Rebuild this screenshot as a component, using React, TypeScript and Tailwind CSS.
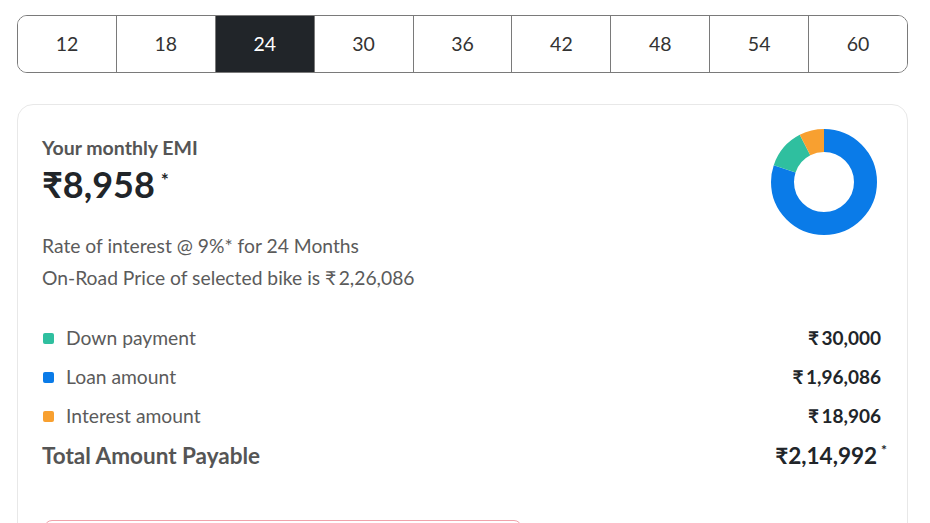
import React from "react";

const tenures = [12, 18, 24, 30, 36, 42, 48, 54, 60];
const selected = 24;

const breakdown = [
  { label: "Down payment", value: "30,000", amount: 30000, color: "#2fbf9f" },
  { label: "Loan amount", value: "1,96,086", amount: 196086, color: "#0a7be8" },
  { label: "Interest amount", value: "18,906", amount: 18906, color: "#f8a030" },
];

function Donut() {
  const r = 41.5;
  const c = 2 * Math.PI * r;
  // chart order: loan first from 12 o'clock, then down payment, then interest
  const order = [breakdown[1], breakdown[0], breakdown[2]];
  const total = order.reduce((s, d) => s + d.amount, 0);
  let offset = 0;
  return (
    <svg width="106" height="106" viewBox="0 0 106 106" className="block">
      <g transform="rotate(-90 53 53)">
        {order.map((d) => {
          const len = (d.amount / total) * c;
          const el = (
            <circle
              key={d.label}
              cx="53"
              cy="53"
              r={r}
              fill="none"
              stroke={d.color}
              strokeWidth="23"
              strokeDasharray={`${len} ${c - len}`}
              strokeDashoffset={-offset}
            />
          );
          offset += len;
          return el;
        })}
      </g>
    </svg>
  );
}

export default function App() {
  return (
    <div
      className="w-[930px] h-[523px] overflow-hidden bg-white pl-[17px] pr-[22px] pt-[15px]"
      style={{ fontFamily: "Lato, 'Noto Sans', sans-serif" }}
    >
      {/* tenure selector */}
      <div className="flex h-[58px] rounded-[10px] border-[1.5px] border-[#7a7a7a] overflow-hidden">
        {tenures.map((t, i) => (
          <div
            key={t}
            className={
              "flex-1 flex items-center justify-center text-[19.5px] " +
              (i > 0 ? "border-l-[1.5px] border-[#7a7a7a] " : "") +
              (t === selected ? "bg-[#212529] text-white" : "bg-white text-[#333]")
            }
          >
            {t}
          </div>
        ))}
      </div>

      {/* EMI summary card */}
      <div className="mt-[31px] w-[891px] rounded-[16px] border border-[#e8e8e8] pl-[24px] pr-[25px] pt-[31px] pb-[40px]">
        <div className="flex justify-between items-start">
          <div>
            <div className="text-[19.5px] leading-[24px] font-bold text-[#555]">Your monthly EMI</div>
            <div className="mt-[4px] text-[36px] leading-[40px] font-bold text-[#212529] flex items-start">
              <span>₹8,958</span>
              <span className="text-[19px] leading-[24px] ml-[6px] mt-[4px]">*</span>
            </div>
            <div className="mt-[26px] text-[19.3px] leading-[32px] text-[#5b5b5b]">
              Rate of interest @ 9%* for 24 Months
            </div>
            <div className="text-[19.3px] leading-[32px] text-[#5b5b5b]">
              On-Road Price of selected bike is ₹{"\u2009"}2,26,086
            </div>
          </div>
          <div className="mt-[-7px] mr-[5px]">
            <Donut />
          </div>
        </div>

        <div className="mt-[32px] flex flex-col gap-[15px]">
          {breakdown.map((d) => (
            <div key={d.label} className="flex items-center justify-between h-[24px]">
              <div className="flex items-center">
                <span
                  className="w-[11px] h-[11px] rounded-[2px] ml-[1px]"
                  style={{ backgroundColor: d.color }}
                />
                <span className="ml-[12px] text-[19.3px] text-[#5b5b5b]">{d.label}</span>
              </div>
              <span className="text-[19px] font-bold text-[#212529] mr-[1px]">
                ₹{"\u2009"}
                {d.value}
              </span>
            </div>
          ))}
          <div className="flex items-center justify-between h-[24px] mt-[1px]">
            <span className="text-[22.5px] font-bold text-[#555]">Total Amount Payable</span>
            <span className="flex items-start text-[22.5px] font-bold text-[#212529] mr-[-5px]">
              <span>₹2,14,992</span>
              <span className="text-[14px] leading-[14px] ml-[4px] mt-[4px]">*</span>
            </span>
          </div>
        </div>

        <button className="mt-[52px] ml-[2px] w-[478px] h-[48px] rounded-[8px] border border-[#f0a3ab] bg-white" />
      </div>
    </div>
  );
}
